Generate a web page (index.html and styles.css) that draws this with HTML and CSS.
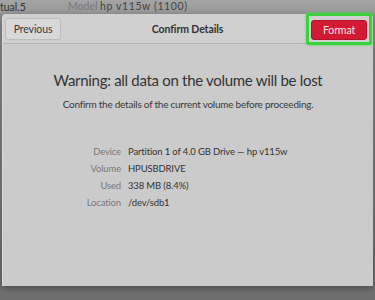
FILE: index.html
```html
<!DOCTYPE html>
<html lang="en">
<head>
    <meta charset="UTF-8">
    <meta name="viewport" content="width=device-width, initial-scale=1.0">
    <title>Confirm Details</title>
    <link rel="stylesheet" href="styles.css">
</head>
<body>
    <div class="backdrop">
        <span class="bg-name">tual.5</span>
        <span class="bg-label">Model</span>
        <span class="bg-value">hp v115w (1100)</span>
    </div>

    <div class="dialog">
        <div class="titlebar">
            <button class="btn">Previous</button>
            <div class="title">Confirm Details</div>
            <div class="highlight">
                <button class="btn btn-danger">Format</button>
            </div>
        </div>

        <div class="content">
            <h1>Warning: all data on the volume will be lost</h1>
            <p class="subtitle">Confirm the details of the current volume before proceeding.</p>

            <div class="details">
                <span class="key">Device</span>
                <span class="val">Partition 1 of 4.0 GB Drive — hp v115w</span>
                <span class="key">Volume</span>
                <span class="val">HPUSBDRIVE</span>
                <span class="key">Used</span>
                <span class="val">338 MB (8.4%)</span>
                <span class="key">Location</span>
                <span class="val">/dev/sdb1</span>
            </div>
        </div>
    </div>
</body>
</html>
```

FILE: styles.css
```css
* {
    margin: 0;
    padding: 0;
    box-sizing: border-box;
}

body {
    font-family: Lato, 'Noto Sans', sans-serif;
    background: linear-gradient(180deg, #8e8e8e 0%, #7c7c7c 60%, #6e6e6e 100%);
    width: 375px;
    height: 300px;
    overflow: hidden;
    color: #3c3c3c;
}

.backdrop {
    height: 14px;
    display: flex;
    align-items: flex-start;
    font-size: 10.5px;
    line-height: 13px;
    background: linear-gradient(180deg, #a4a4a4, #989898);
}

.bg-name {
    color: #333;
    width: 68px;
    margin-top: 1px;
}

.bg-label {
    color: #777;
    width: 32px;
}

.bg-value {
    color: #444;
    letter-spacing: 0.6px;
}

.dialog {
    margin-left: 2px;
    width: 371px;
    height: 272px;
    background: #cbcbcb;
    border-left: 1px solid #dcdcdc;
    border-radius: 4px 4px 0 0;
    box-shadow: 0 2px 6px rgba(0,0,0,0.35);
    display: flex;
    flex-direction: column;
}

.titlebar {
    height: 30px;
    display: flex;
    align-items: center;
    justify-content: space-between;
    padding: 0 1px 0 2px;
    background: #d0d0d0;
    border-bottom: 1px solid #b3b3b3;
    border-radius: 4px 4px 0 0;
}

.title {
    font-size: 10.5px;
    font-weight: 700;
    letter-spacing: -0.1px;
    color: #333;
    margin-left: 8px;
}

.btn {
    font-family: inherit;
    font-size: 10.5px;
    letter-spacing: -0.1px;
    height: 22px;
    width: 56px;
    border-radius: 3px;
    border: 1px solid #bdbdbd;
    background: #d8d8d8;
    color: #3a3a3a;
}

.highlight {
    border: 3px solid #3cd23c;
    border-radius: 2px;
    padding: 2px;
    background: #d0d0d0;
    box-shadow: 0 0 3px #5be05b;
}

.btn-danger {
    height: 20px;
    background: #d21a34;
    border-color: #b0142a;
    color: #f3e3e5;
}

.content {
    display: flex;
    flex-direction: column;
    align-items: center;
    padding-top: 25px;
}

h1 {
    font-size: 15px;
    font-weight: 400;
    letter-spacing: -0.3px;
    color: #333;
    line-height: 22px;
}

.subtitle {
    font-size: 10px;
    letter-spacing: -0.25px;
    color: #3a3a3a;
    margin-top: 7px;
}

.details {
    align-self: flex-start;
    margin-left: 55px;
    margin-top: 35px;
    display: grid;
    grid-template-columns: 63px auto;
    column-gap: 7px;
    row-gap: 3px;
    font-size: 9.5px;
    letter-spacing: -0.15px;
    line-height: 14px;
}

.key {
    text-align: right;
    color: #7a7a7a;
}

.val {
    color: #333;
}
```
